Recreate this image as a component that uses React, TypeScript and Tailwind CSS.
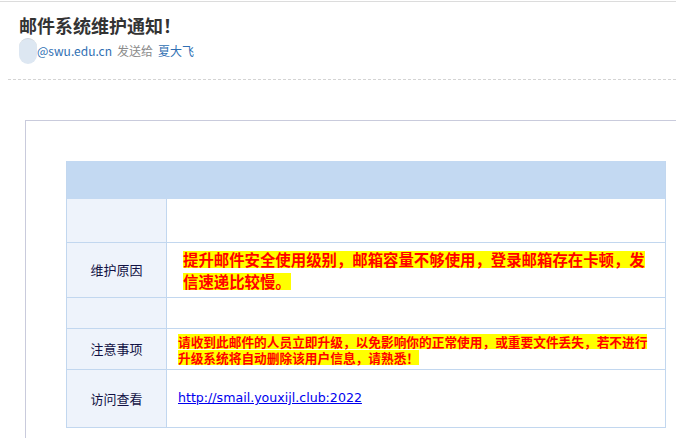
import React from "react";

const cjk = { fontFamily: '"Noto Sans CJK SC", "Noto Sans", sans-serif' };

export default function App() {
  return (
    <div className="w-[676px] h-[438px] overflow-hidden bg-white" style={cjk}>
      <div className="mt-px h-px bg-[#dcdcdc]" />
      <div className="pl-[19px] pt-[10px]">
        <div className="text-[18px] leading-[26px] font-bold text-[#333333]">邮件系统维护通知！</div>
        <div className="flex items-center h-[26px] text-[12px]">
          <div className="w-[18px] h-[26px] rounded-full bg-[#dde7f2] border-t border-[#cfd4da]" />
          <span className="text-[#2f6fb3]">@swu.edu.cn</span>
          <span className="ml-[5px] text-[#8a8a8a]">发送给</span>
          <span className="ml-[5px] text-[#2f6fb3]">夏大飞</span>
        </div>
      </div>
      <div className="ml-[8px] mt-[15px] border-t border-dashed border-[#d4d4d4]" />
      <div className="ml-[25px] mt-[40px] w-[720px] border border-[#c9cbdc] p-[40px]">
        <div className="w-[600px] border-x border-b border-[#c2d7ef]">
          <div className="h-[38px] bg-[#c3d9f2]" />
          <div className="flex h-[43px]">
            <div className="w-[100px] bg-[#eef3fb] border-r border-[#c2d7ef]" />
            <div className="flex-1" />
          </div>
          <div className="flex h-[55px] border-t border-[#c2d7ef]">
            <div className="w-[100px] bg-[#eef3fb] border-r border-[#c2d7ef] flex items-center justify-center text-[13px] text-[#111144]">
              维护原因
            </div>
            <div className="flex-1 flex flex-col justify-center pl-[16px] gap-[5px] text-[15.4px] font-bold text-[#ff0000]">
              <span className="self-start whitespace-nowrap bg-[#ffff00] h-[17px] leading-[17px]">
                提升邮件安全使用级别，邮箱容量不够使用，登录邮箱存在卡顿，发
              </span>
              <span className="self-start whitespace-nowrap bg-[#ffff00] h-[17px] leading-[17px]">信速递比较慢。</span>
            </div>
          </div>
          <div className="flex h-[31px] border-t border-[#c2d7ef]">
            <div className="w-[100px] bg-[#eef3fb] border-r border-[#c2d7ef]" />
            <div className="flex-1" />
          </div>
          <div className="flex h-[41px] border-t border-[#c2d7ef]">
            <div className="w-[100px] bg-[#eef3fb] border-r border-[#c2d7ef] flex items-center justify-center text-[13px] text-[#111144]">
              注意事项
            </div>
            <div className="flex-1 flex flex-col justify-center pl-[11px] gap-[1px] text-[12.7px] font-bold text-[#ff0000]">
              <span className="self-start whitespace-nowrap bg-[#ffff00] h-[15px] leading-[15px]">
                请收到此邮件的人员立即升级，以免影响你的正常使用，或重要文件丢失，若不进行
              </span>
              <span className="self-start whitespace-nowrap bg-[#ffff00] h-[15px] leading-[15px]">
                升级系统将自动删除该用户信息，请熟悉！
              </span>
            </div>
          </div>
          <div className="flex h-[58px] border-t border-[#c2d7ef]">
            <div className="w-[100px] bg-[#eef3fb] border-r border-[#c2d7ef] flex items-center justify-center text-[13px] text-[#111144]">
              访问查看
            </div>
            <div className="flex-1 flex items-center pl-[11px]">
              <a
                href="#"
                className="text-[12.6px] text-[#0000ee] underline"
                style={{ fontFamily: '"DejaVu Sans", sans-serif' }}
              >
                http://smail.youxijl.club:2022
              </a>
            </div>
          </div>
        </div>
      </div>
    </div>
  );
}
